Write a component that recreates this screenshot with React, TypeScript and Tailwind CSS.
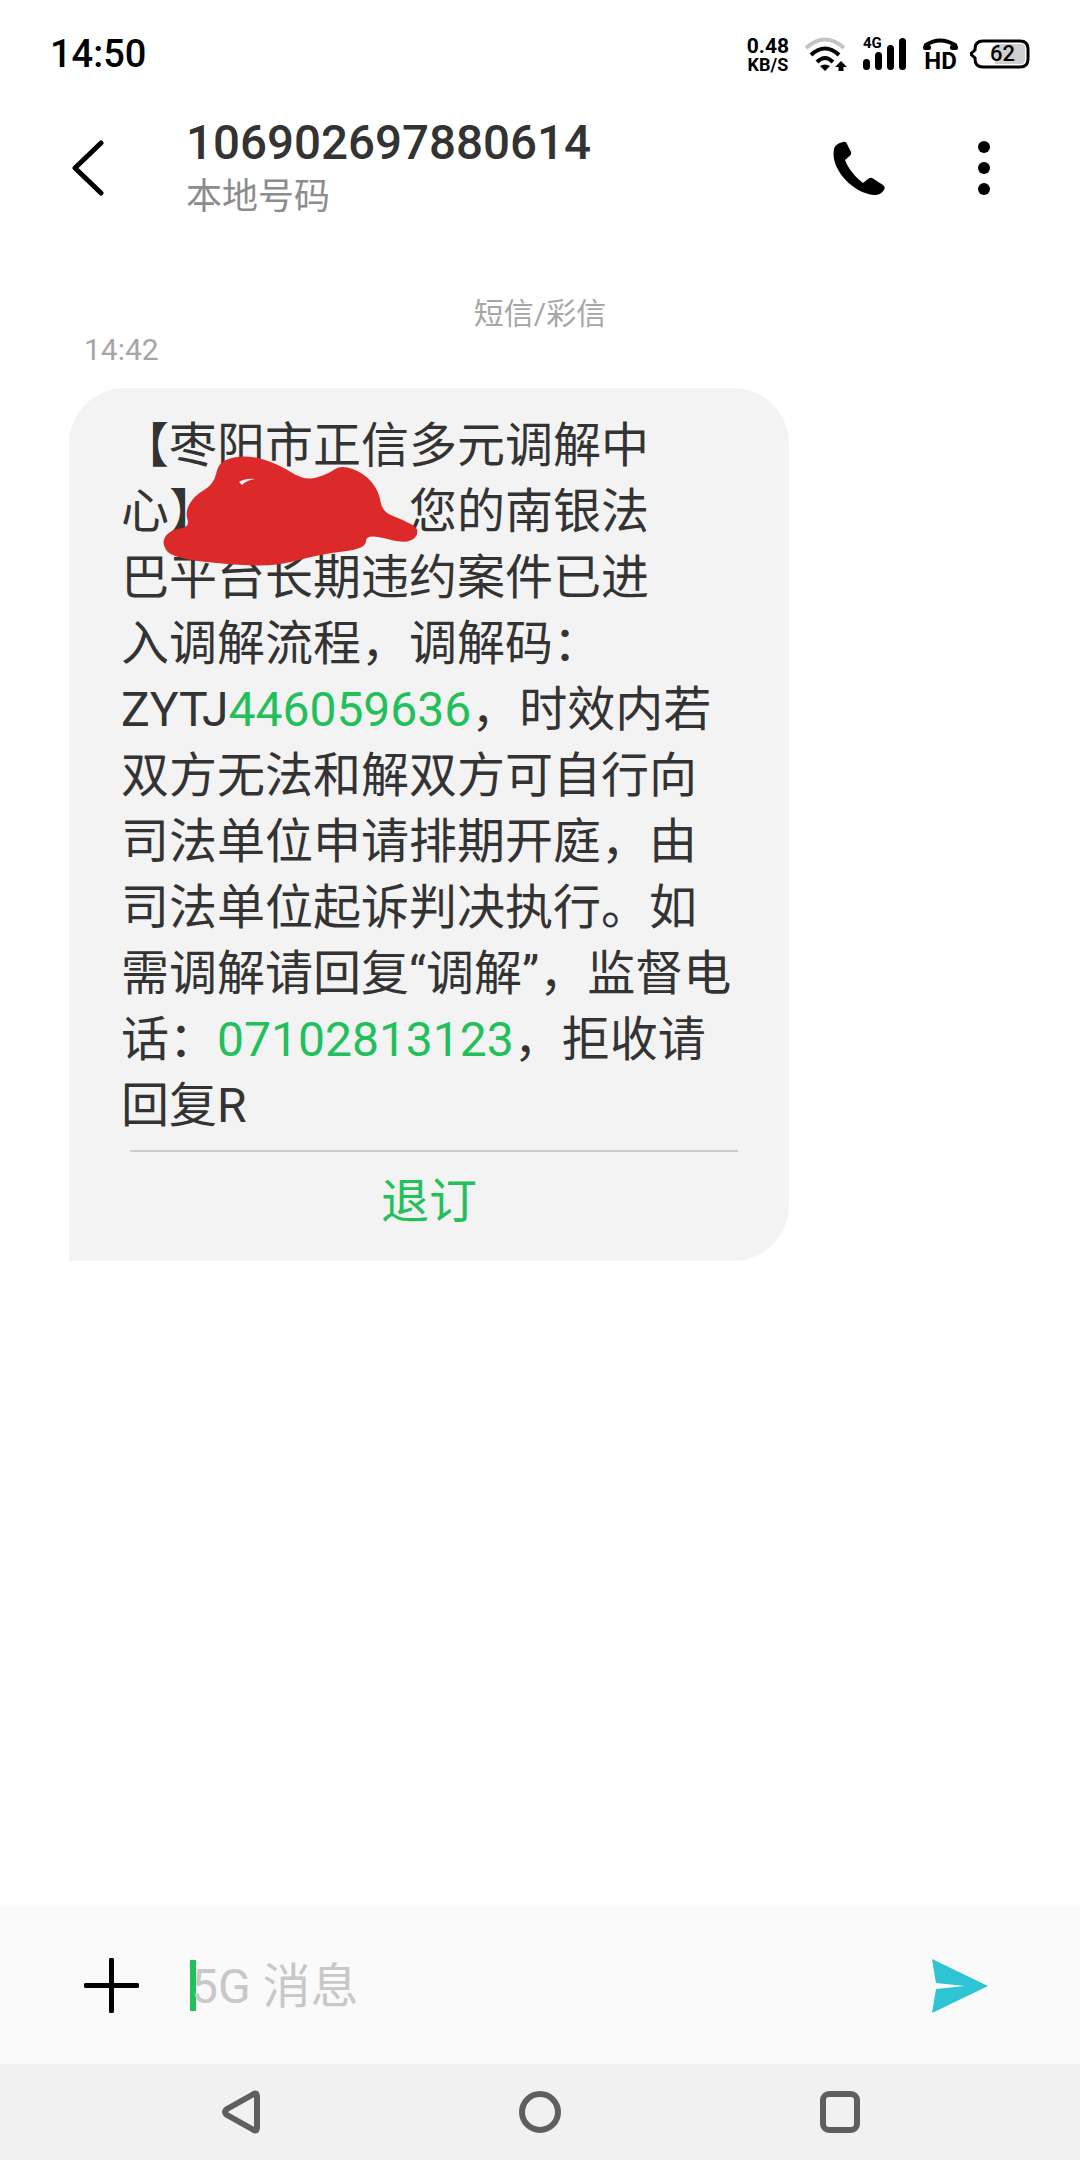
import React from 'react';

// outline of the red scribble, in page coordinates
const scribble: [number, number][] = [
  [214, 484], [218, 464], [232, 457], [252, 456], [278, 464], [305, 481], [328, 474], [341, 465], [364, 473],
  [379, 491], [382, 512], [404, 520], [421, 530], [409, 545], [366, 533], [366, 549], [320, 554], [278, 566],
  [232, 565], [172, 558], [161, 543], [170, 530], [190, 527], [185, 512], [194, 496],
];

const smoothPath = (pts: [number, number][]) => {
  const mid = (a: [number, number], b: [number, number]) => `${(a[0] + b[0]) / 2} ${(a[1] + b[1]) / 2}`;
  let d = `M${mid(pts[pts.length - 1], pts[0])}`;
  pts.forEach((p, i) => {
    d += ` Q${p[0]} ${p[1]} ${mid(p, pts[(i + 1) % pts.length])}`;
  });
  return d + ' Z';
};

const Green = ({ children }: { children: React.ReactNode }) => <span className="text-[#22c05a]">{children}</span>;

const messageLines: React.ReactNode[] = [
  '【枣阳市正信多元调解中',
  <>心】<span className="inline-block w-[192px]" />您的南银法</>,
  '巴平台长期违约案件已进',
  '入调解流程，调解码：',
  <>ZYTJ<Green>446059636</Green>，时效内若</>,
  '双方无法和解双方可自行向',
  '司法单位申请排期开庭，由',
  '司法单位起诉判决执行。如',
  '需调解请回复“调解”，监督电',
  <>话：<Green>07102813123</Green>，拒收请</>,
  '回复R',
];

const StatusIcons = () => (
  <div className="flex items-center">
    <div className="flex flex-col items-center font-bold text-black">
      <span className="text-[21px] leading-[20px]">0.48</span>
      <span className="text-[18px] leading-[17px]">KB/S</span>
    </div>
    {/* wifi */}
    <svg className="ml-[14px]" width="44" height="36" viewBox="804 36 44 36" fill="none">
      <path d="M807 48 Q826 31 845 48" stroke="#c4c4c4" strokeWidth="4" />
      <path d="M812 55 Q826 42 840 55" stroke="#000" strokeWidth="4" />
      <path d="M818 62 Q826 54 834 62" stroke="#000" strokeWidth="4" />
      <path d="M821 66 Q826 63 831 66 L826 71 Z" fill="#000" />
      <path d="M842 61 L848 67 H844.500 V71 H839.500 V67 H836 Z" fill="#000" />
    </svg>
    {/* signal */}
    <div className="relative ml-[16px] h-[34px] w-[43px]">
      <span className="absolute left-0 top-[-2px] text-[15px] font-bold leading-[16px] text-black">4G</span>
      <svg width="43" height="34" viewBox="864 37 43 34" fill="#000">
        <rect x="864" y="59" width="7" height="11" rx="3.500" />
        <rect x="876" y="52" width="7" height="18" rx="3.500" />
        <rect x="888" y="45" width="7" height="25" rx="3.500" />
        <rect x="900" y="38" width="7" height="32" rx="3.500" />
      </svg>
    </div>
    {/* HD call */}
    <div className="ml-[17px] flex w-[35px] flex-col items-center">
      <svg width="35" height="14" viewBox="0 0 35 14" fill="none">
        <path d="M3 11 V8 Q17 -1 32 8 V11" stroke="#000" strokeWidth="4" />
        <rect x="0" y="8" width="8" height="5" rx="2" fill="#000" />
        <rect x="27" y="8" width="8" height="5" rx="2" fill="#000" />
      </svg>
      <span className="text-[24px] font-bold leading-[20px] text-black">HD</span>
    </div>
    {/* battery */}
    <div className="relative ml-[12px] h-[30px] w-[60px]">
      <svg width="60" height="30" viewBox="0 0 60 30" fill="none">
        <path d="M0.500 15 L5 11 V10 Q5 2 13 2 H50 Q58 2 58 10 V20 Q58 28 50 28 H13 Q5 28 5 20 V19 Z" stroke="#000" strokeWidth="3" fill="#fff" />
        <path d="M25 5 H51 Q55 5 55 9 V21 Q55 25 51 25 H25 Z" fill="#cfcfcf" />
      </svg>
      <span className="absolute left-[20px] top-[2px] text-[22px] font-medium leading-[26px] text-black">62</span>
    </div>
  </div>
);

const App: React.FC = () => {
  return (
    <div className="flex h-[2160px] w-[1080px] flex-col overflow-hidden bg-white font-['Roboto','Noto_Sans_CJK_SC',sans-serif]">
      {/* status bar */}
      <div className="flex h-[108px] items-center justify-between pl-[50px] pr-[50px]">
        <span className="text-[38px] font-medium text-black">14:50</span>
        <StatusIcons />
      </div>

      {/* header */}
      <div className="flex h-[120px] items-center">
        <svg className="ml-[70px]" width="34" height="56" viewBox="0 0 34 56" fill="none">
          <path d="M31 3 L5 28 L31 53" stroke="#000" strokeWidth="5" strokeLinecap="round" strokeLinejoin="round" />
        </svg>
        <div className="ml-[82px] flex flex-col pt-[4px]">
          <span className="text-[47.500px] font-medium leading-[54px] text-[#333333]">106902697880614</span>
          <span className="text-[36px] leading-[54px] text-[#8c8c8c]">本地号码</span>
        </div>
        <svg className="ml-auto" width="52" height="55" viewBox="0 0 52 55" fill="#000">
          <path d="M1 8 C2 4 6 2 10 1 C12 0.500 13.500 1 14 3 L18 11 C18.500 13 18 14 16 15.500 L12 19 C15 27 22 36 30 42 L35 38 C37 36.500 38.500 36.500 40 37.500 L50 44 C52 45.500 52 47 51 49 C49 52 46 54 41 54 C20 52 0 30 0.500 12 Z" />
        </svg>
        <div className="ml-[93px] mr-[90px] flex flex-col gap-[9px]">
          <div className="h-[12px] w-[12px] rounded-full bg-black" />
          <div className="h-[12px] w-[12px] rounded-full bg-black" />
          <div className="h-[12px] w-[12px] rounded-full bg-black" />
        </div>
      </div>

      {/* messages */}
      <div className="flex-1">
        <div className="mt-[66px] text-center text-[30px] leading-[40px] text-[#a6a6a6]">短信/彩信</div>
        <div className="ml-[84px] mt-[-4px] text-[30px] leading-[40px] text-[#a6a6a6]">14:42</div>
        <div className="relative ml-[69px] mt-[18px] h-[873px] w-[720px] rounded-[56px] rounded-bl-none bg-[#f3f3f3] pl-[52px] pt-[25px]">
          <div className="text-[48px] leading-[66px] text-[#333333]">
            {messageLines.map((line, index) => (
              <div key={index} className="whitespace-nowrap">
                {line}
              </div>
            ))}
          </div>
          <div className="ml-[9px] mt-[11px] h-[2px] w-[608px] bg-[#cccccc]" />
          <div className="ml-[-52px] mt-[20px] text-center text-[48px] leading-[60px] text-[#22c05a]">退订</div>
          <svg className="absolute left-[90px] top-[66px]" width="264" height="114" viewBox="159 454 264 114">
            <path d={smoothPath(scribble)} fill="#dc2a2a" />
            <path d="M239 482 Q246 478 255 479 Q247 480 242 485 Z" fill="#f3f3f3" />
          </svg>
        </div>
      </div>

      {/* input bar */}
      <div className="flex h-[158px] items-center bg-[#fafafa]">
        <svg className="ml-[84px] mt-[1px]" width="55" height="55" viewBox="0 0 55 55" fill="none">
          <path d="M27.500 2 V53 M2 27.500 H53" stroke="#000" strokeWidth="5" strokeLinecap="round" />
        </svg>
        <div className="ml-[51px] mt-[1px] h-[51px] w-[6px] bg-[#22c05a]" />
        <span className="ml-[-5px] mt-[4px] text-[48px] leading-[60px] text-[#c8c8c8]">5G 消息</span>
        <svg className="ml-auto mr-[91px] mt-[2px]" width="58" height="56" viewBox="0 0 58 56" fill="#2ec4d4">
          <path d="M1 1 L57 28 L1 55 L5 31 L34 28 L5 25 Z" />
        </svg>
      </div>

      {/* nav bar */}
      <div className="flex h-[96px] items-center justify-center gap-[240px] bg-[#f1f1f1]">
        <svg width="60" height="60" viewBox="0 0 60 60" fill="none" stroke="#5f5f5f" strokeWidth="6" strokeLinejoin="round">
          <path d="M42 13 Q47 9 47 15 V45 Q47 51 42 47 L17 33 Q13 30 17 27 Z" />
        </svg>
        <svg width="60" height="60" viewBox="0 0 60 60" fill="none" stroke="#5f5f5f" strokeWidth="6">
          <circle cx="30" cy="30" r="18" />
        </svg>
        <svg width="60" height="60" viewBox="0 0 60 60" fill="none" stroke="#5f5f5f" strokeWidth="6">
          <rect x="13" y="12" width="34" height="36" rx="6" />
        </svg>
      </div>
    </div>
  );
};

export default App;
